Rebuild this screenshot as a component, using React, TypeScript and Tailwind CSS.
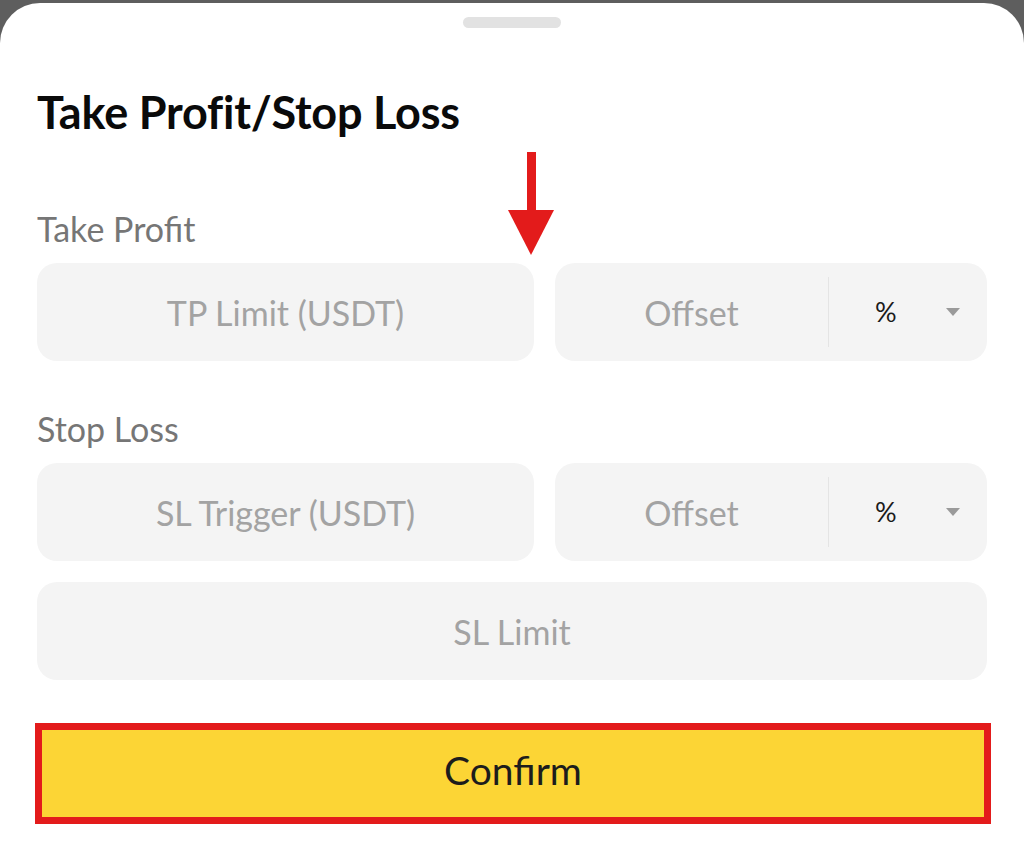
import { ReactNode } from 'react';

const font = { fontFamily: 'Lato, "Open Sans", "Liberation Sans", sans-serif' };

function Field({ children, className = '' }: { children: ReactNode; className?: string }) {
  return (
    <div className={`h-[98px] bg-[#f4f4f4] rounded-[20px] flex items-center ${className}`}>
      {children}
    </div>
  );
}

function OffsetField() {
  return (
    <Field className="flex-1">
      <div className="flex-1 text-center text-[34px] text-[#a3a3a3]">Offset</div>
      <div className="w-px h-[70px] bg-[#e4e4e4]" />
      <div className="w-[158px] flex items-center pl-[46px]">
        <span className="text-[27px] text-[#1a1a1a]">%</span>
        <svg className="ml-[48px]" width="16" height="10" viewBox="0 0 16 10">
          <path d="M1 1 L15 1 L8 9 Z" fill="#9a9a9a" />
        </svg>
      </div>
    </Field>
  );
}

export default function App() {
  return (
    <div className="w-[1024px] h-[856px] bg-[#5e5e5e] flex flex-col overflow-hidden" style={font}>
      <div className="h-[3px] overflow-hidden flex items-end text-[24px] leading-none">
        <span className="ml-[645px] -mb-[22px] text-[#2f9e6a]">Profit/Loss</span>
        <span className="ml-[80px] -mb-[22px] text-[#111]">0.00310</span>
      </div>

      <div className="flex-1 bg-white rounded-t-[40px] px-[37px] flex flex-col">
        <div className="self-center mt-[14px] w-[98px] h-[11px] rounded-full bg-[#e2e2e2]" />

        <h1 className="mt-[62px] h-[47px] text-[45px] leading-none font-bold text-[#0a0a0a] tracking-[-0.2px]">
          Take Profit/Stop Loss
        </h1>

        <div className="flex h-[126px] items-end">
          <div className="w-[470px] text-[34px] text-[#767676] leading-none pb-[17px]">Take Profit</div>
          <svg className="mb-[7px]" width="48" height="104" viewBox="0 0 48 104">
            <rect x="20" y="0" width="9" height="60" fill="#e31b1b" />
            <path d="M1 58 L47 58 L24 103 Z" fill="#e31b1b" />
          </svg>
        </div>

        <div className="flex gap-[21px]">
          <Field className="w-[497px] justify-center">
            <span className="text-[34px] text-[#a3a3a3]">TP Limit (USDT)</span>
          </Field>
          <OffsetField />
        </div>

        <div className="mt-[51px] mb-[17px] text-[34px] text-[#767676] leading-none">Stop Loss</div>

        <div className="flex gap-[21px]">
          <Field className="w-[497px] justify-center">
            <span className="text-[34px] text-[#a3a3a3]">SL Trigger (USDT)</span>
          </Field>
          <OffsetField />
        </div>

        <Field className="mt-[21px] justify-center">
          <span className="text-[34px] text-[#a3a3a3]">SL Limit</span>
        </Field>

        <button
          type="button"
          className="mt-[43px] -ml-[2px] w-[956px] h-[101px] pb-[7px] bg-[#fcd535] border-[7px] border-[#e31b1b] flex items-center justify-center text-[39px] text-[#1c1c1c]"
        >
          Confirm
        </button>
      </div>
    </div>
  );
}
